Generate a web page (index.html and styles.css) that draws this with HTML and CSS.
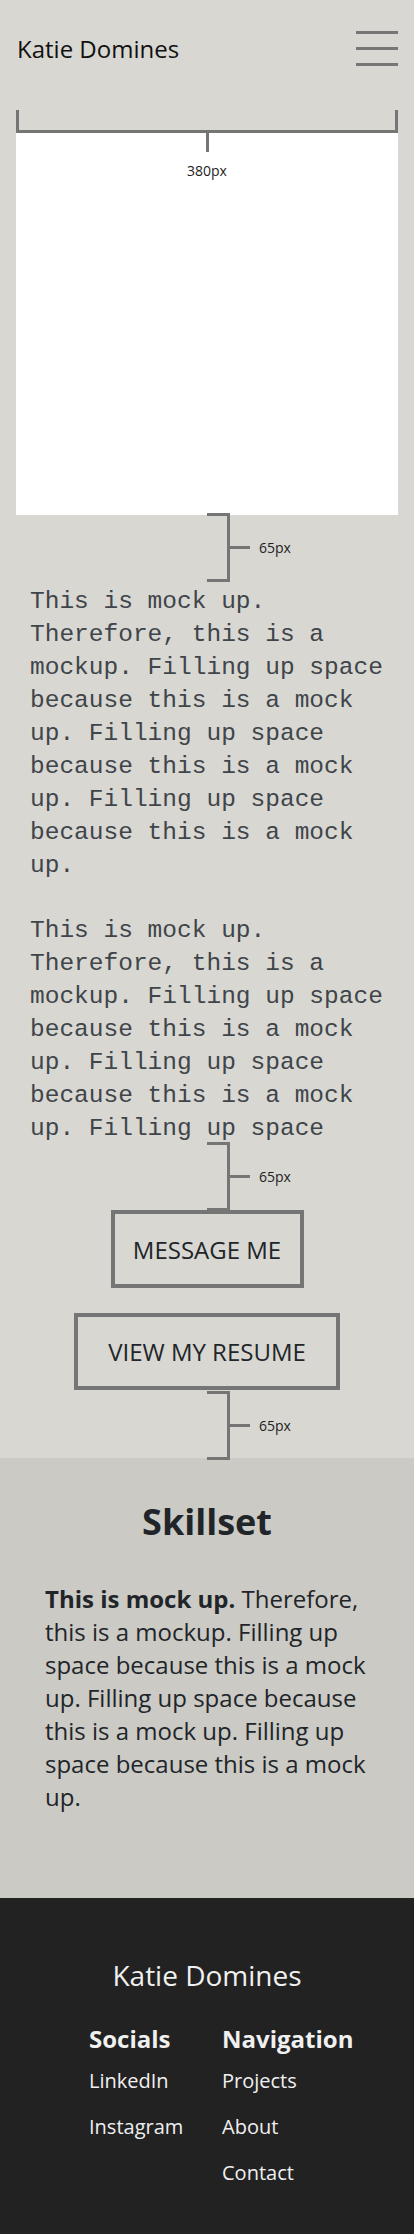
FILE: index.html
```html
<!DOCTYPE html>
<html lang="en">
<head>
<meta charset="utf-8">
<title>Katie Domines</title>
<link rel="stylesheet" href="styles.css">
</head>
<body>
<header class="top">
  <div class="brand">Katie Domines</div>
  <button class="menu" aria-label="Menu"><span></span><span></span><span></span></button>
</header>
<main>
  <section class="hero">
    <div class="dim-width"></div>
    <div class="photo">
      <span class="photo-tick"></span>
      <span class="dim-label">380px</span>
    </div>
    <div class="gap65 gap-a"><span class="brk"></span><span class="brk-tick"></span><span class="dim-label">65px</span></div>
    <div class="intro">
      <p>This is mock up. Therefore, this is a mockup. Filling up space because this is a mock up. Filling up space because this is a mock up. Filling up space because this is a mock up.</p>
      <p>This is mock up. Therefore, this is a mockup. Filling up space because this is a mock up. Filling up space because this is a mock up. Filling up space</p>
    </div>
    <div class="gap65 gap-b"><span class="brk"></span><span class="brk-tick"></span><span class="dim-label">65px</span></div>
    <div class="actions">
      <a class="btn btn-msg" href="#">MESSAGE ME</a>
      <a class="btn btn-cv" href="#">VIEW MY RESUME</a>
    </div>
    <div class="gap65 gap-c"><span class="brk"></span><span class="brk-tick"></span><span class="dim-label">65px</span></div>
  </section>
  <section class="skills">
    <h2 class="skills-title">Skillset</h2>
    <p class="skills-text"><strong>This is mock up.</strong><span> Therefore, this is a mockup. Filling up space because this is a mock up. Filling up space because this is a mock up. Filling up space because this is a mock up.</span></p>
  </section>
</main>
<footer class="foot">
  <div class="foot-name">Katie Domines</div>
  <div class="foot-cols">
    <div class="foot-col foot-col-social">
      <h3 class="foot-head">Socials</h3>
      <a class="foot-link" href="#">LinkedIn</a>
      <a class="foot-link" href="#">Instagram</a>
    </div>
    <div class="foot-col">
      <h3 class="foot-head">Navigation</h3>
      <a class="foot-link" href="#">Projects</a>
      <a class="foot-link" href="#">About</a>
      <a class="foot-link" href="#">Contact</a>
    </div>
  </div>
</footer>
</body>
</html>
```
FILE: styles.css
```css
* { box-sizing: border-box; }
html, body { margin: 0; padding: 0; }
body {
  background: #d8d7d2;
  font-family: "Open Sans", "Liberation Sans", sans-serif;
  color: #212529;
}

.top {
  height: 97px;
  display: flex;
  align-items: center;
  justify-content: space-between;
  padding: 0 16px 0 17px;
}
.brand {
  font-size: 24px;
  color: #111;
  line-height: 1;
}
.menu {
  width: 42px;
  height: 35px;
  padding: 0;
  border: 0;
  background: none;
  display: flex;
  flex-direction: column;
  justify-content: space-between;
}
.menu span {
  display: block;
  width: 42px;
  height: 3px;
  background: #757575;
}

.hero { display: flex; flex-direction: column; }

.dim-width {
  margin: 13px 16px 0;
  height: 23px;
  border: 3px solid #757575;
  border-top: 0;
}
.photo {
  margin: 0 16px;
  height: 382px;
  background: #fff;
  display: flex;
  flex-direction: column;
  align-items: center;
}
.photo-tick {
  width: 3px;
  height: 19px;
  background: #757575;
}
.dim-label {
  font-size: 14px;
  line-height: 16px;
  color: #222;
}
.photo .dim-label { margin-top: 11px; }

.gap65 {
  display: flex;
  align-items: center;
  padding-left: 207px;
  height: 69px;
}
.brk {
  width: 23px;
  height: 69px;
  border: 3px solid #757575;
  border-left: 0;
}
.brk-tick {
  width: 20px;
  height: 3px;
  background: #757575;
}
.gap65 .dim-label { margin-left: 9px; }
.gap-a { margin-top: -2px; }
.gap-b { margin-top: -3px; }
.gap-c { margin-top: 1px; margin-bottom: -2px; position: relative; }

.intro {
  padding: 0 20px 0 30px;
  font-family: "Liberation Mono", "DejaVu Sans Mono", monospace;
  font-size: 24.5px;
  line-height: 33px;
  color: #3f454a;
}
.intro p { margin: 3px 0 0; }
.intro p + p { margin-top: 32px; }

.actions {
  display: flex;
  flex-direction: column;
  align-items: center;
  gap: 25px;
  margin-top: -1px;
}
.btn {
  display: flex;
  align-items: center;
  justify-content: center;
  border: 4px solid #757575;
  font-size: 24px;
  color: #212529;
  text-decoration: none;
}
.btn-msg { width: 193px; height: 78px; }
.btn-cv { width: 266px; height: 77px; }

.skills {
  background: #cbcac5;
  height: 440px;
  padding: 40px 30px 0 45px;
}
.skills-title {
  margin: 0 -30px 0 -45px;
  text-align: center;
  font-size: 36px;
  font-weight: 700;
  line-height: 48px;
}
.skills-text {
  margin: 36px 0 0;
  font-size: 24px;
  line-height: 33px;
}

.foot {
  background: #222;
  color: #f0f0f0;
  height: 339px;
  padding-top: 57px;
}
.foot-name {
  text-align: center;
  font-size: 28px;
  line-height: 40px;
}
.foot-cols {
  display: flex;
  margin: 28px 0 0 89px;
}
.foot-col { display: flex; flex-direction: column; }
.foot-col-social { width: 133px; }
.foot-head {
  margin: 0;
  font-size: 24px;
  font-weight: 700;
  line-height: 32px;
}
.foot-link {
  color: #f0f0f0;
  text-decoration: none;
  font-size: 20px;
  line-height: 46px;
}
.foot-head + .foot-link { margin-top: 3px; }
```
